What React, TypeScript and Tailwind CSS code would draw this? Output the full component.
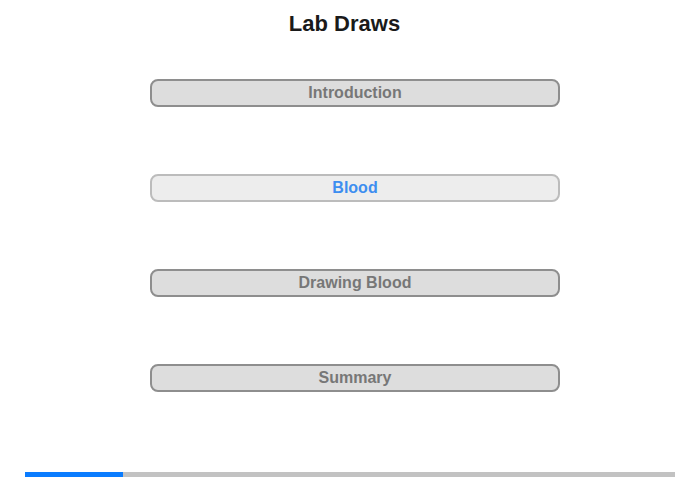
const sections = [
  { label: "Introduction", active: false },
  { label: "Blood", active: true },
  { label: "Drawing Blood", active: false },
  { label: "Summary", active: false },
];

export default function App(): JSX.Element {
  return (
    <div className="w-[700px] h-[480px] bg-white font-['Liberation_Sans',Arial,sans-serif] flex flex-col">
      <h1 className="w-[689px] h-[46px] flex items-center justify-center text-[22px] font-bold text-[#1a1a1a]">
        Lab Draws
      </h1>
      <div className="flex flex-col gap-[67px] mt-[33px] ml-[150px]">
        {sections.map((s) => (
          <button
            key={s.label}
            className={
              s.active
                ? "w-[410px] h-[28px] rounded-[8px] border-2 border-[#bcbcbc] bg-[#ededed] text-[16px] font-bold text-[#3d8ef0] flex items-center justify-center"
                : "w-[410px] h-[28px] rounded-[8px] border-2 border-[#8e8e8e] bg-[#dddddd] text-[16px] font-bold text-[#777777] flex items-center justify-center"
            }
          >
            {s.label}
          </button>
        ))}
      </div>
      <div className="mt-auto mb-[3px] mx-[25px] h-[5px] bg-[#c2c2c2] flex">
        <div className="w-[98px] h-full bg-[#0a7cff]" />
      </div>
    </div>
  );
}
